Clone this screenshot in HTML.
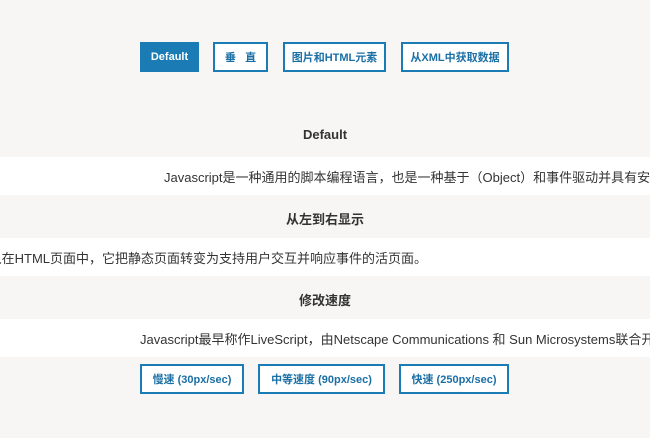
<!DOCTYPE html>
<html><head><meta charset="utf-8"><style>
body{margin:0;width:650px;height:438px;background:#f7f6f5;font-family:"Liberation Sans","Noto Sans CJK SC",sans-serif;color:#333;overflow:hidden;position:relative}
.b{position:absolute;box-sizing:border-box;border:2px solid #1a7bb5;background:#fff;color:#1a6fa5;font-size:11px;font-weight:bold;display:flex;align-items:center;justify-content:center;white-space:nowrap}
.f{background:#1a7bb5;color:#fff}
.h{position:absolute;left:0;width:650px;text-align:center;font-size:13px;font-weight:bold;color:#333}
.w{position:absolute;left:0;width:650px;height:38px;background:#fff;overflow:hidden}
.t{position:absolute;top:10px;font-size:13px;white-space:nowrap;color:#333}
</style></head><body>
<div class="b f" style="left:140px;top:42px;width:59px;height:30px">Default</div>
<div class="b" style="left:213px;top:42px;width:55px;height:30px">垂&nbsp;&nbsp;&nbsp;直</div>
<div class="b" style="left:283px;top:42px;width:103px;height:30px">图片和HTML元素</div>
<div class="b" style="left:401px;top:42px;width:108px;height:30px">从XML中获取数据</div>
<div class="h" style="top:127px">Default</div>
<div class="w" style="top:157px"><div class="t" style="left:164px">Javascript是一种通用的脚本编程语言，也是一种基于（Object）和事件驱动并具有安全性能的脚本语言。</div></div>
<div class="h" style="top:209px">从左到右显示</div>
<div class="w" style="top:238px"><div class="t" style="right:223px">它可以嵌入在HTML页面中，它把静态页面转变为支持用户交互并响应事件的活页面。</div></div>
<div class="h" style="top:290px">修改速度</div>
<div class="w" style="top:319px"><div class="t" style="left:140px">Javascript最早称作LiveScript，由Netscape Communications 和 Sun Microsystems联合开发。</div></div>
<div class="b" style="left:140px;top:364px;width:104px;height:30px">慢速 (30px/sec)</div>
<div class="b" style="left:258px;top:364px;width:127px;height:30px">中等速度 (90px/sec)</div>
<div class="b" style="left:399px;top:364px;width:110px;height:30px">快速 (250px/sec)</div>
</body></html>
